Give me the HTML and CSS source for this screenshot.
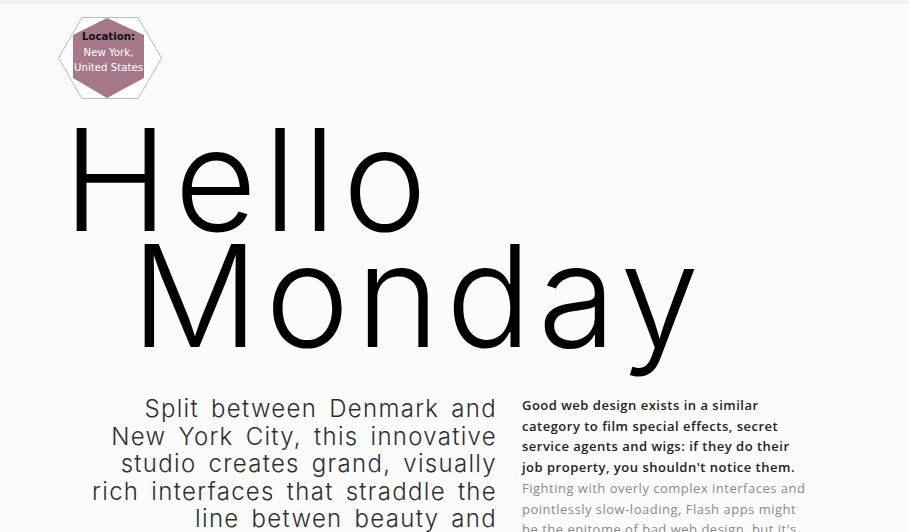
FILE: index.html
```html
<!DOCTYPE html>
<html>
<head>
<meta charset="utf-8">
<link rel="stylesheet" href="styles.css">
</head>
<body>
<div class="topbar"></div>
<main class="page">
  <div class="badge">
    <svg class="badge-shape" width="104" height="82" viewBox="0 0 104 82">
      <polygon points="24,0.5 80,0.5 103.5,41 80,81.5 24,81.5 0.5,41" fill="#ffffff" stroke="#b9b9b9" stroke-width="1"/>
      <polygon points="49,1 86,18 86,61 49,81 15,61 15,18" fill="#a47888"/>
    </svg>
    <div class="badge-text">
      <span class="badge-label">Location:</span>
      <span>New York,</span>
      <span>United States</span>
    </div>
  </div>
  <h1 class="title"><span class="l1">Hello</span><span class="l2">Monday</span></h1>
  <section class="cols">
    <p class="lead">Split between Denmark and New York City, this innovative studio creates grand, visually rich interfaces that straddle the line betwen beauty and function.</p>
    <p class="body"><strong>Good web design exists in a similar category to film special effects, secret service agents and wigs: if they do their job property, you shouldn't notice them.</strong> Fighting with overly complex interfaces and pointlessly slow-loading, Flash apps might be the epitome of bad web design, but it's</p>
  </section>
</main>
</body>
</html>
```
FILE: styles.css
```css
html, body {
  margin: 0;
  padding: 0;
  background: #fbfbfb;
  overflow: hidden;
  height: 532px;
}
.topbar {
  height: 4px;
  background: #edf2f8;
}
.page {
  padding: 13px 0 0 58px;
}
.badge {
  position: relative;
  width: 104px;
  height: 82px;
}
.badge-shape {
  display: block;
}
.badge-text {
  position: absolute;
  top: 12px;
  left: 0;
  width: 101px;
  display: flex;
  flex-direction: column;
  align-items: center;
  font-family: "DejaVu Sans", Verdana, sans-serif;
  font-size: 10.2px;
  line-height: 15.5px;
  color: #ffffff;
}
.badge-label {
  color: #111;
  font-weight: bold;
}
.title {
  margin: 22px 0 0 0;
  font-family: Inter, sans-serif;
  font-weight: 300;
  font-size: 142px;
  letter-spacing: 6.5px;
  line-height: 116px;
  color: #000;
  display: flex;
  flex-direction: column;
}
.title .l1 { margin-left: 5px; }
.title .l2 { margin-left: 73px; }
.cols {
  margin-top: 42px;
  padding-left: 26px;
  display: flex;
  gap: 25px;
}
.lead {
  margin: 0;
  width: 413px;
  text-align: right;
  font-family: Inter, sans-serif;
  font-weight: 300;
  font-size: 24px;
  letter-spacing: 1.3px;
  word-spacing: 4px;
  line-height: 27.5px;
  color: #2e2e2e;
}
.body {
  margin: 0;
  width: 290px;
  font-family: "Open Sans", sans-serif;
  font-size: 13px;
  letter-spacing: 0.5px;
  line-height: 20.7px;
  color: #8a8a8a;
}
.body strong {
  color: #222;
  font-weight: 600;
}
```
